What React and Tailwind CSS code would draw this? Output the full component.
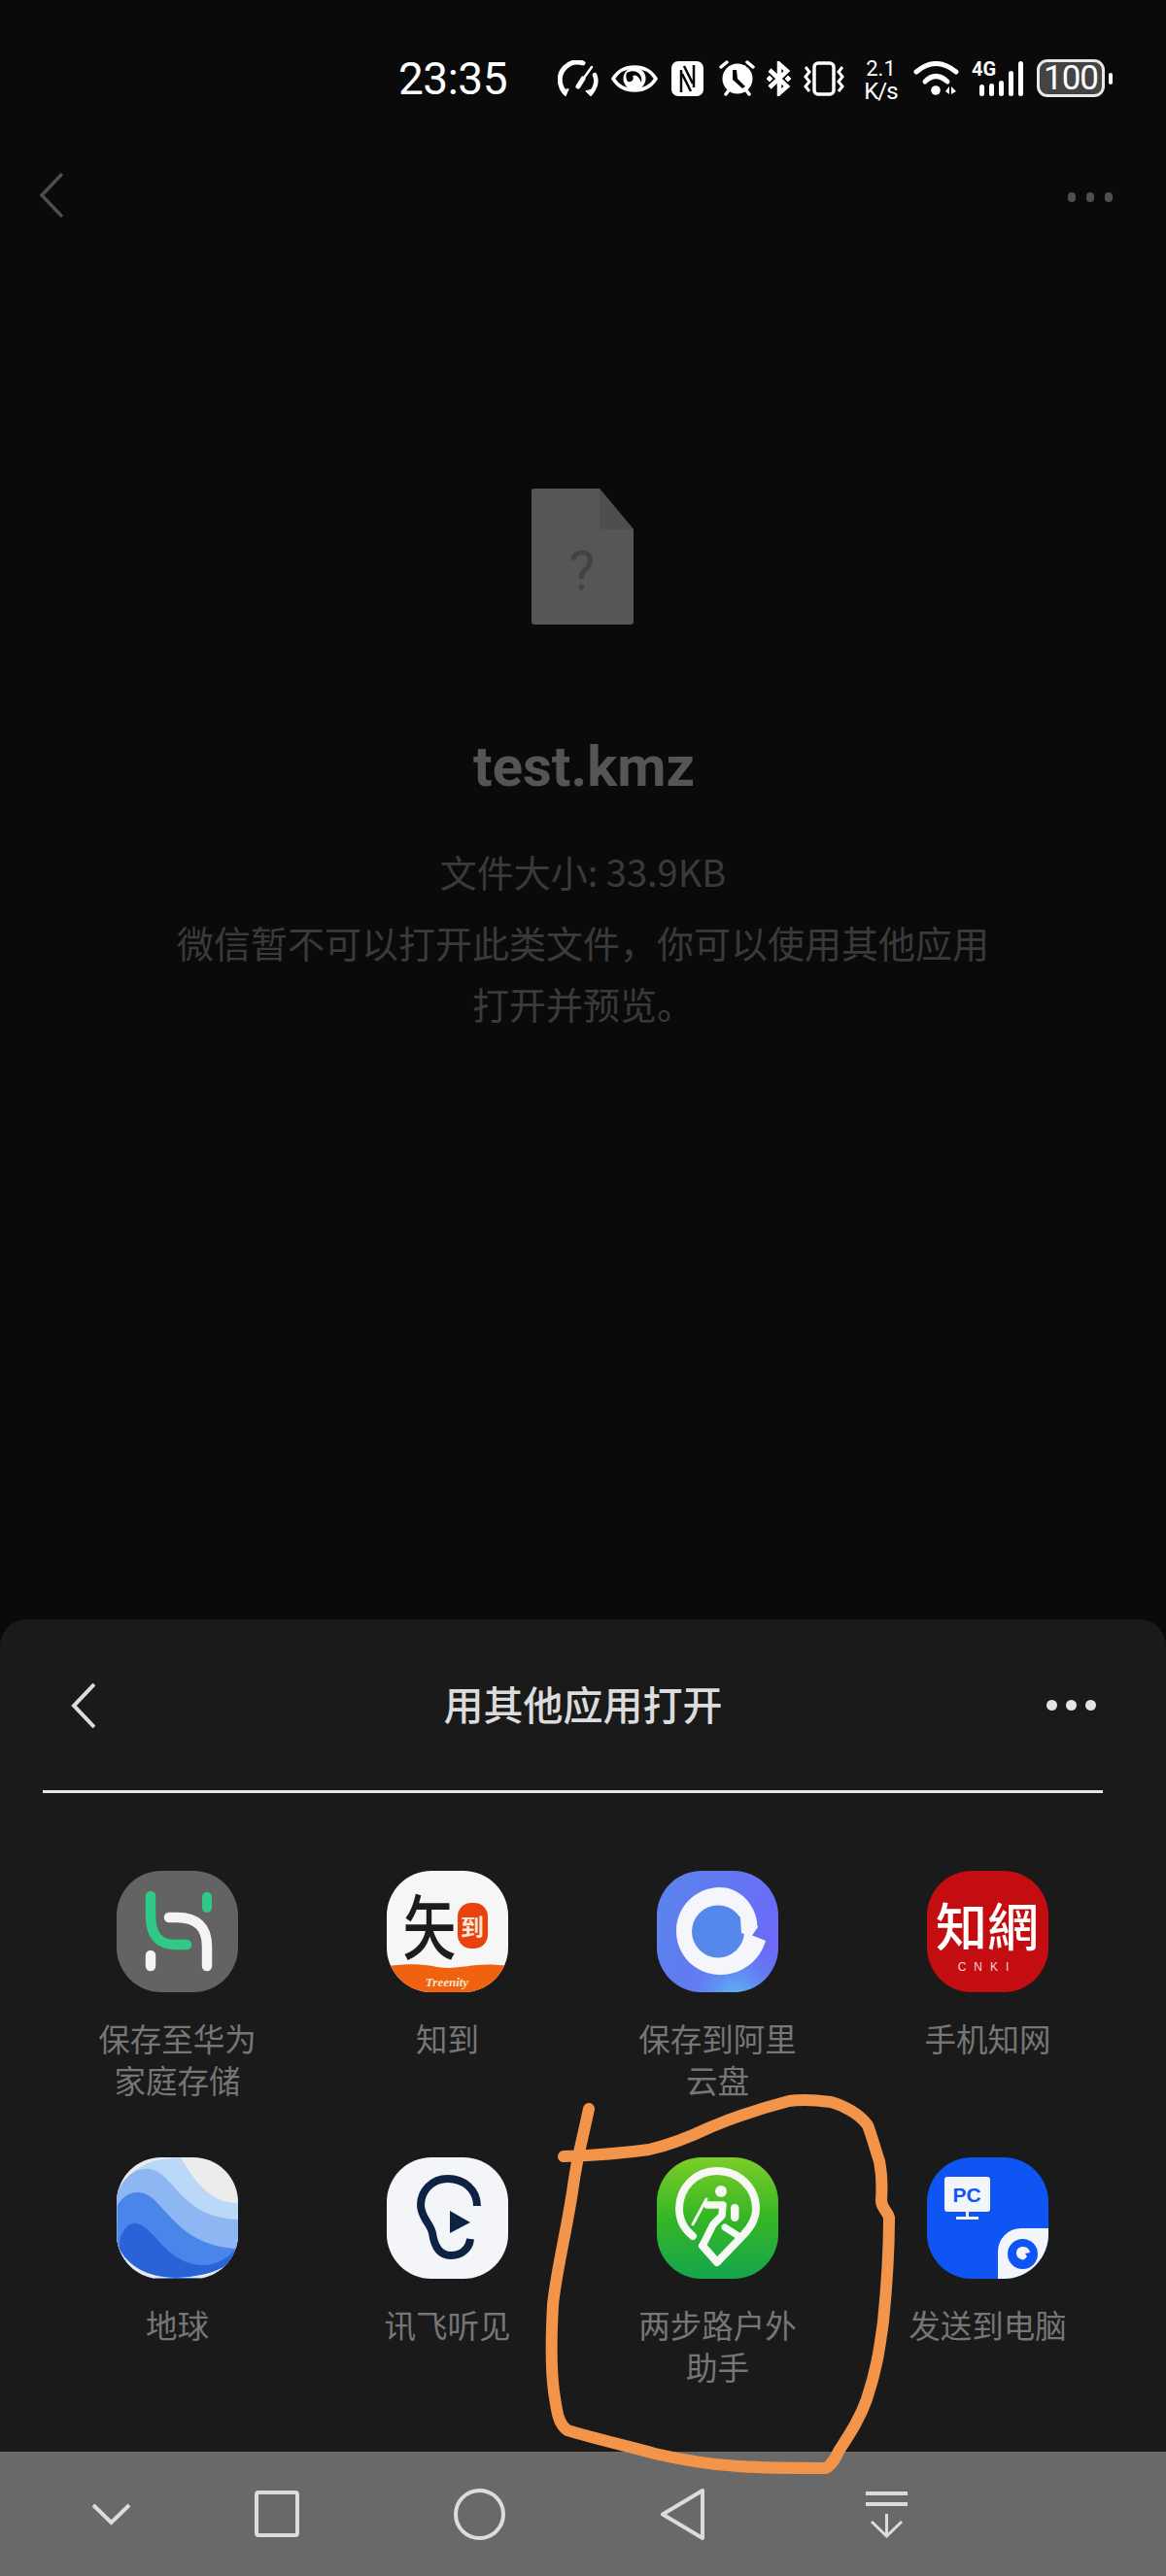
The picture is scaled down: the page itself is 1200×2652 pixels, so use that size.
const CJK = 'font-["Noto_Sans_CJK_SC",sans-serif]'

// status bar icons
const Gauge = () => (
  <svg width="42" height="38" viewBox="0 0 42 38" fill="none" stroke="white" strokeLinecap="round">
    <path d="M7 33 C0 24 1 13 8 7 C13 2 20 1 26 3" strokeWidth="5" />
    <path d="M3 31 L8 37 L11 30 Z" fill="white" strokeWidth="1" />
    <path d="M38 15 C41 22 39 28 34 34" strokeWidth="4.5" />
    <path d="M29 32 L34 37 L37 30 Z" fill="white" strokeWidth="1" />
    <path d="M35 7 L22 25" strokeWidth="2.5" />
    <path d="M26 19 L21 27" strokeWidth="5" />
  </svg>
)

const Eye = () => (
  <svg width="48" height="30" viewBox="0 0 48 30" fill="none">
    <path d="M2 15 C12 -1 36 -1 46 15 C36 31 12 31 2 15 Z" stroke="white" strokeWidth="3.5" />
    <circle cx="24" cy="15" r="11.5" fill="white" />
    <path d="M16 9 C25 4 33 10 31 19 C29 14 26 10 22 12 C24 15 22 19 17 18 C15 15 15 12 16 9 Z" fill="#050505" />
  </svg>
)

const Nfc = () => (
  <svg width="33" height="36" viewBox="0 0 33 36" fill="none">
    <rect width="33" height="36" rx="7" fill="white" />
    <path d="M10 9 V32 M23 4 V27" stroke="#050505" strokeWidth="2.5" />
    <path d="M13 5 L22 23 M11 13 L20 31" stroke="#050505" strokeWidth="2.5" />
  </svg>
)

const Alarm = () => (
  <svg width="39" height="37" viewBox="0 0 39 37" fill="none">
    <circle cx="20" cy="19" r="15.5" fill="white" />
    <path d="M15 10 L19 10 L20 19 L28 27 L25 29 L15 20 Z" fill="#050505" />
    <path d="M3 7 L9 2 M36 7 L30 2 M8 35 L11 31 M32 35 L29 31" stroke="white" strokeWidth="3.5" strokeLinecap="round" />
  </svg>
)

const Bluetooth = () => (
  <svg width="27" height="36" viewBox="0 0 27 36" fill="none" stroke="white" strokeWidth="4.5">
    <path d="M4 9 L22 26 L14 33 V3 L22 10 L4 27" />
    <path d="M1 18 L4 15 L7 18 L4 21 Z" fill="white" strokeWidth="1" />
    <path d="M20 18 L23 15 L26 18 L23 21 Z" fill="white" strokeWidth="1" />
  </svg>
)

const Vibrate = () => (
  <svg width="44" height="36" viewBox="0 0 44 36" fill="none" stroke="white">
    <rect x="12" y="2" width="20" height="32" rx="4" strokeWidth="3.5" />
    <path d="M3 6 L7 11 L3 16 L7 21 L3 26 L7 31" strokeWidth="3" />
    <path d="M41 6 L37 11 L41 16 L37 21 L41 26 L37 31" strokeWidth="3" />
  </svg>
)

const Wifi = () => (
  <svg width="47" height="36" viewBox="0 0 47 36" fill="none" stroke="white" strokeLinecap="round">
    <path d="M3 11 Q23 -6 44 11" strokeWidth="5" />
    <path d="M12 21 Q23 10 35 21" strokeWidth="5" />
    <circle cx="23" cy="30" r="4.8" fill="white" stroke="none" />
    <path d="M33 31 L37 26 V34 Z M39 26 L44 31 L39 34 Z" fill="white" stroke="none" />
  </svg>
)

const Signal = () => (
  <div className="relative h-[36px] w-[53px]">
    <span className="absolute left-0 top-[-3px] font-['Roboto',sans-serif] text-[20px] font-bold leading-[22px] text-white">4G</span>
    <div className="absolute bottom-0 left-[8px] flex items-end gap-[5px]">
      <div className="h-[12px] w-[5px] rounded-full bg-white" />
      <div className="h-[13px] w-[5px] rounded-full bg-white" />
      <div className="h-[16px] w-[5px] rounded-full bg-white" />
      <div className="h-[26px] w-[5px] rounded-full bg-white" />
      <div className="h-[36px] w-[5px] rounded-full bg-white" />
    </div>
  </div>
)

const Battery = () => (
  <div className="flex items-center gap-[4px]">
    <div className="flex h-[39px] w-[70px] items-center justify-center rounded-[11px] border-[3px] border-[#e8e8e8] bg-[#444444]">
      <span className="font-['Roboto',sans-serif] text-[35px] leading-none tracking-[-1px] text-white">100</span>
    </div>
    <div className="h-[12px] w-[4px] rounded-full bg-white" />
  </div>
)

const StatusBar = () => (
  <div className="flex h-[160px] items-center pl-[410px] pt-[1px]">
    <span className="w-[112px] font-['Roboto',sans-serif] text-[46px] leading-none tracking-[-0.5px] text-white">23:35</span>
    <div className="ml-[52px]"><Gauge /></div>
    <div className="ml-[13px]"><Eye /></div>
    <div className="ml-[14px]"><Nfc /></div>
    <div className="ml-[15px]"><Alarm /></div>
    <div className="ml-[10px]"><Bluetooth /></div>
    <div className="ml-[11px]"><Vibrate /></div>
    <div className="ml-[18px] flex w-[37px] flex-col items-center font-['Roboto',sans-serif] text-white">
      <span className="text-[22px] leading-[26px]">2.1</span>
      <span className="text-[24px] leading-[20px] tracking-[-1px]">K/s</span>
    </div>
    <div className="ml-[15px]"><Wifi /></div>
    <div className="ml-[13px]"><Signal /></div>
    <div className="ml-[14px]"><Battery /></div>
  </div>
)

const FileIcon = () => (
  <div className="relative h-[140px] w-[105px]">
    <svg width="105" height="140" viewBox="0 0 105 140">
      <path d="M3 0 H70 L105 42 V137 Q105 140 102 140 H3 Q0 140 0 137 V3 Q0 0 3 0 Z" fill="#565656" />
      <path d="M70 0 L105 42 H74 Q70 42 70 38 Z" fill="#4e4e4e" />
    </svg>
    <span className="absolute inset-x-0 top-[52px] text-center font-['Roboto',sans-serif] text-[56px] leading-[66px] text-[#424242]">?</span>
  </div>
)

// app icons, all on a 125 box
const HomeStorageIcon = () => (
  <svg width="125" height="125" viewBox="0 0 125 125" fill="none" strokeLinecap="round">
    <rect width="125" height="125" fill="#636363" />
    <path d="M35 26 V46 Q35 76 60 76 H72" stroke="#2fcb86" strokeWidth="10.5" />
    <path d="M93 27 V38" stroke="#2fcb86" strokeWidth="10" />
    <path d="M54 48 H62 Q93 48 93 78 V98" stroke="#f4f4f4" strokeWidth="10.5" />
    <path d="M35 87 V98" stroke="#f4f4f4" strokeWidth="10.5" />
  </svg>
)

const ZhidaoIcon = () => (
  <div className="relative h-[125px] w-[125px] bg-[#f6f6f6]">
    <span className={`absolute left-[17px] top-[13px] origin-top scale-y-[1.3] ${CJK} text-[55px] font-medium leading-[62px] text-[#1c1c1c]`}>矢</span>
    <div className="absolute left-[73px] top-[33px] flex h-[47px] w-[31px] items-center justify-center rounded-[14px] bg-[#e8430f]">
      <span className={`${CJK} text-[24px] font-bold leading-none text-[#f8e8d8]`}>到</span>
    </div>
    <svg className="absolute bottom-0 left-0" width="125" height="30" viewBox="0 0 125 30">
      <path d="M0 3 C20 1 35 0 52 4 C75 8 90 -2 125 3 V30 H0 Z" fill="#f0620f" />
    </svg>
    <span className="absolute inset-x-0 top-[107px] text-center font-['Liberation_Serif',serif] text-[13px] font-bold italic leading-[16px] text-[#fbe6d0]">Treenity</span>
  </div>
)

const AliyunIcon = () => (
  <svg width="125" height="125" viewBox="0 0 125 125">
    <defs>
      <radialGradient id="aliGlow" cx="0.65" cy="1.05" r="0.5">
        <stop offset="0" stopColor="#5cc0ef" />
        <stop offset="1" stopColor="#5c78f2" stopOpacity="0" />
      </radialGradient>
      <linearGradient id="aliBase" x1="0" y1="0" x2="1" y2="0.3">
        <stop offset="0" stopColor="#5a86ec" />
        <stop offset="1" stopColor="#6a6cf6" />
      </linearGradient>
    </defs>
    <rect width="125" height="125" fill="url(#aliBase)" />
    <rect width="125" height="125" fill="url(#aliGlow)" />
    <path d="M20 62 C20 37 40 17 65 17 C84 17 100 33 103 52 C104 58 100 62 97 66 L112 72 C106 93 87 107 65 107 C40 107 20 87 20 62 Z" fill="#f4f6fb" />
    <circle cx="63" cy="62.5" r="27" fill="#5687ea" />
    <path d="M86 48 L87 64 L97 68 L104 58 L100 46 Z" fill="#f4f6fb" />
  </svg>
)

const CnkiIcon = () => (
  <div className="flex h-[125px] w-[125px] flex-col items-center bg-[#c40d11] pt-[25px] text-white">
    <span className={`font-["Noto_Sans_CJK_TC",sans-serif] text-[53px] font-medium leading-[60px]`}>知網</span>
    <span className="mt-[7px] font-['Liberation_Sans',sans-serif] text-[12px] leading-[14px] tracking-[8px] text-[#f6d6d6]">CNKI</span>
  </div>
)

const EarthIcon = () => (
  <svg width="125" height="125" viewBox="0 0 125 125">
    <rect width="125" height="125" fill="#ececec" />
    <path d="M0 36 C10 18 24 6 46 2 L66 0 C80 24 96 47 125 47 V125 H0 Z" fill="#bcd8f8" />
    <path d="M0 40 C6 18 24 8 38 13 C60 20 68 62 125 64 V125 H0 Z" fill="#8db6f2" />
    <path d="M1 49 C8 38 18 34 28 37 C50 44 62 92 125 94 V125 H0 Z" fill="#4a86ea" />
    <path d="M4 82 C8 72 14 67 20 68 C40 72 50 108 86 111 C102 112 115 104 125 92 V125 H0 Z" fill="#2a63d8" />
    <path d="M0 88 C8 110 30 124 62 124 L0 125 Z" fill="#e9e9e9" />
    <path d="M125 100 C116 112 100 122 62 124 H125 Z" fill="#e9e9e9" />
  </svg>
)

const EarIcon = () => (
  <svg width="125" height="125" viewBox="0 0 125 125" fill="none">
    <rect width="125" height="125" fill="#f3f5f8" />
    <path d="M93 50 C93 33 79 22 63 22 C46 22 35 35 35 49 C35 62 45 68 47 78 C49 92 55 101 66 101 C77 101 85 94 86 84" stroke="#0e2243" strokeWidth="8" />
    <path d="M65 55 L86 67 L65 78 Z" fill="#0e2243" />
  </svg>
)

const HikerIcon = () => (
  <svg width="125" height="125" viewBox="0 0 125 125" fill="none" strokeLinecap="round" strokeLinejoin="round">
    <defs>
      <linearGradient id="hikerBg" x1="0" y1="0" x2="0" y2="1">
        <stop offset="0" stopColor="#7ccd28" />
        <stop offset="0.5" stopColor="#35b625" />
        <stop offset="1" stopColor="#15a54c" />
      </linearGradient>
    </defs>
    <rect width="125" height="125" fill="url(#hikerBg)" />
    <path d="M37 81 C27 73 23 63 23 53 C23 31 40 14 62 14 C84 14 102 31 102 53 C102 64 95 74 88 81 L62 108 L47 91" stroke="#f6f8f4" strokeWidth="8" strokeLinecap="round" />
    <circle cx="66" cy="35" r="6" fill="#f6f8f4" />
    <path d="M51 43 L37 69" stroke="#f6f8f4" strokeWidth="3" />
    <path d="M52 49 H68 L67 60 L58 69 L47 91" stroke="#f6f8f4" strokeWidth="7.5" />
    <path d="M70 72 L84 81" stroke="#f6f8f4" strokeWidth="7" />
    <rect x="76" y="48" width="8.5" height="18" rx="4.2" fill="#f6f8f4" />
  </svg>
)

const SendPcIcon = () => (
  <div className="relative h-[125px] w-[125px] bg-[#0f55f4]">
    <div className="absolute left-[18px] top-[20px] flex h-[36px] w-[47px] items-center justify-center rounded-[3px] bg-[#f2f5fa]">
      <span className="font-['Liberation_Sans',sans-serif] text-[21px] font-bold leading-none text-[#0f55f4]">PC</span>
    </div>
    <div className="absolute left-[40px] top-[56px] h-[5px] w-[3px] bg-[#f2f5fa]" />
    <div className="absolute left-[30px] top-[61px] h-[3px] w-[23px] bg-[#f2f5fa]" />
    <div className="absolute left-[73px] top-[73px] flex h-[52px] w-[52px] items-center justify-center rounded-tl-[24px] bg-[#f2f5fa]">
      <div className="flex h-[31px] w-[31px] items-center justify-center rounded-full bg-[#0f55f4]">
        <svg width="16" height="16" viewBox="0 0 16 16">
          <path d="M1 8 C1 3 4 1 8 1 C12 1 15 4 15 7 L10 8 L12 11 C10 14 8 15 6 14 C3 13 1 11 1 8 Z" fill="#f2f5fa" />
        </svg>
      </div>
    </div>
  </div>
)

const apps = [
  { name: '保存至华为家庭存储', icon: <HomeStorageIcon /> },
  { name: '知到', icon: <ZhidaoIcon /> },
  { name: '保存到阿里云盘', icon: <AliyunIcon /> },
  { name: '手机知网', icon: <CnkiIcon /> },
  { name: '地球', icon: <EarthIcon /> },
  { name: '讯飞听见', icon: <EarIcon /> },
  { name: '两步路户外助手', icon: <HikerIcon /> },
  { name: '发送到电脑', icon: <SendPcIcon /> },
]

const AppTile = ({ name, icon }) => (
  <div className="flex h-[295px] flex-col items-center">
    <div className="h-[125px] w-[125px] overflow-hidden rounded-[46px]">{icon}</div>
    <p className={`ml-[1px] mt-[25px] w-[170px] text-center ${CJK} text-[32.5px] leading-[43px] text-[#767676]`}>{name}</p>
  </div>
)

const SystemNav = () => (
  <div className="flex h-[128px] items-center bg-[#696969] pl-[94px]">
    <svg width="41" height="23" viewBox="0 0 41 23" fill="none" stroke="#dcdcdc" strokeWidth="4">
      <path d="M2 2 L20.5 20 L39 2" />
    </svg>
    <svg className="ml-[127px]" width="46" height="48" viewBox="0 0 46 48" fill="none" stroke="#dcdcdc" strokeWidth="4">
      <rect x="2" y="2" width="42" height="44" rx="2" />
    </svg>
    <svg className="ml-[159px]" width="53" height="53" viewBox="0 0 53 53" fill="none" stroke="#dcdcdc" strokeWidth="4">
      <circle cx="26.5" cy="26.5" r="24.5" />
    </svg>
    <svg className="ml-[160px]" width="45" height="53" viewBox="0 0 45 53" fill="none" stroke="#dcdcdc" strokeWidth="4" strokeLinejoin="round">
      <path d="M43 2 V51 L2 26.5 Z" />
    </svg>
    <svg className="ml-[166px]" width="43" height="50" viewBox="0 0 43 50" fill="none" stroke="#dcdcdc" strokeWidth="4">
      <path d="M0 4 H43 M0 15 H43" />
      <path d="M21.5 25 V47 M6 33 L21.5 48 L37 33" strokeWidth="3" />
    </svg>
  </div>
)

const Scribble = () => (
  <svg className="pointer-events-none absolute left-0 top-0" width="1200" height="2652" viewBox="0 0 1200 2652" fill="none">
    <path
      d="M606 2171 C600 2200 594 2220 590 2250 C584 2293 572 2340 569 2373 C567 2410 567 2440 570 2462 C573 2482 574 2495 584 2502 C610 2510 645 2518 674 2526 C700 2532 725 2537 760 2539 C790 2541 825 2541 850 2541 C856 2538 860 2530 864 2522 C875 2505 885 2490 892 2470 C902 2440 905 2420 909 2390 C913 2350 915 2320 915 2283 C913 2275 907 2274 907 2265 C908 2250 908 2240 905 2225 C900 2210 897 2198 893 2188 C885 2177 870 2168 855 2164 C840 2162 825 2161 812 2163 C785 2170 755 2180 731 2190 C710 2200 690 2208 668 2213 C640 2217 610 2219 580 2220"
      stroke="#f2954b"
      strokeWidth="12"
      strokeLinecap="round"
      strokeLinejoin="round"
    />
  </svg>
)

export default function App() {
  return (
    <div className={`relative flex h-[2652px] w-[1200px] flex-col overflow-hidden bg-[#0a0a0a] ${CJK}`}>
      <StatusBar />

      {/* dimmed WeChat file page */}
      <div className="flex h-[82px] items-center justify-between pl-[41px] pr-[55px]">
        <svg width="24" height="46" viewBox="0 0 24 46" fill="none" stroke="#4d4d4d" strokeWidth="3.5">
          <path d="M23 1 L2 23 L23 45" />
        </svg>
        <div className="flex gap-[11px] pt-[4px]">
          <div className="h-[10px] w-[8px] rounded-full bg-[#4f4f4f]" />
          <div className="h-[10px] w-[8px] rounded-full bg-[#4f4f4f]" />
          <div className="h-[10px] w-[8px] rounded-full bg-[#4f4f4f]" />
        </div>
      </div>

      <div className="flex flex-1 flex-col items-center">
        <div className="-ml-[2px] mt-[261px]"><FileIcon /></div>
        <h1 className="ml-[2px] mt-[111px] font-['Roboto',sans-serif] text-[58px] font-bold leading-[70px] text-[#555555]">test.kmz</h1>
        <p className="mt-[40px] text-[38px] leading-[65px] text-[#3a3a3a]">文件大小: 33.9KB</p>
        <p className="mt-[9px] w-[860px] text-center text-[38px] leading-[63px] text-[#3a3a3a]">微信暂不可以打开此类文件，你可以使用其他应用打开并预览。</p>
      </div>

      {/* bottom sheet */}
      <div className="h-[857px] rounded-t-[28px] bg-[#1a1a1a]">
        <div className="relative flex h-[176px] items-center justify-center">
          <svg className="absolute left-[73px] top-[66px]" width="25" height="46" viewBox="0 0 25 46" fill="none" stroke="#dcdcdc" strokeWidth="4">
            <path d="M24 1 L3 23 L24 45" />
          </svg>
          <h2 className="pb-[5px] text-[41px] font-medium leading-[60px] text-[#dcdcdc]">用其他应用打开</h2>
          <div className="absolute right-[72px] top-[83px] flex gap-[9px]">
            <div className="h-[11px] w-[11px] rounded-full bg-[#e4e4e4]" />
            <div className="h-[11px] w-[11px] rounded-full bg-[#e4e4e4]" />
            <div className="h-[11px] w-[11px] rounded-full bg-[#e4e4e4]" />
          </div>
        </div>
        <div className="mx-[44px] h-[3px] w-[1091px] bg-[#e6e6e6]" />
        <div className="grid grid-cols-4 pl-[43px] pr-[45px] pt-[80px]">
          {apps.map((app) => (
            <AppTile key={app.name} name={app.name} icon={app.icon} />
          ))}
        </div>
      </div>

      <SystemNav />
      <Scribble />
    </div>
  )
}
